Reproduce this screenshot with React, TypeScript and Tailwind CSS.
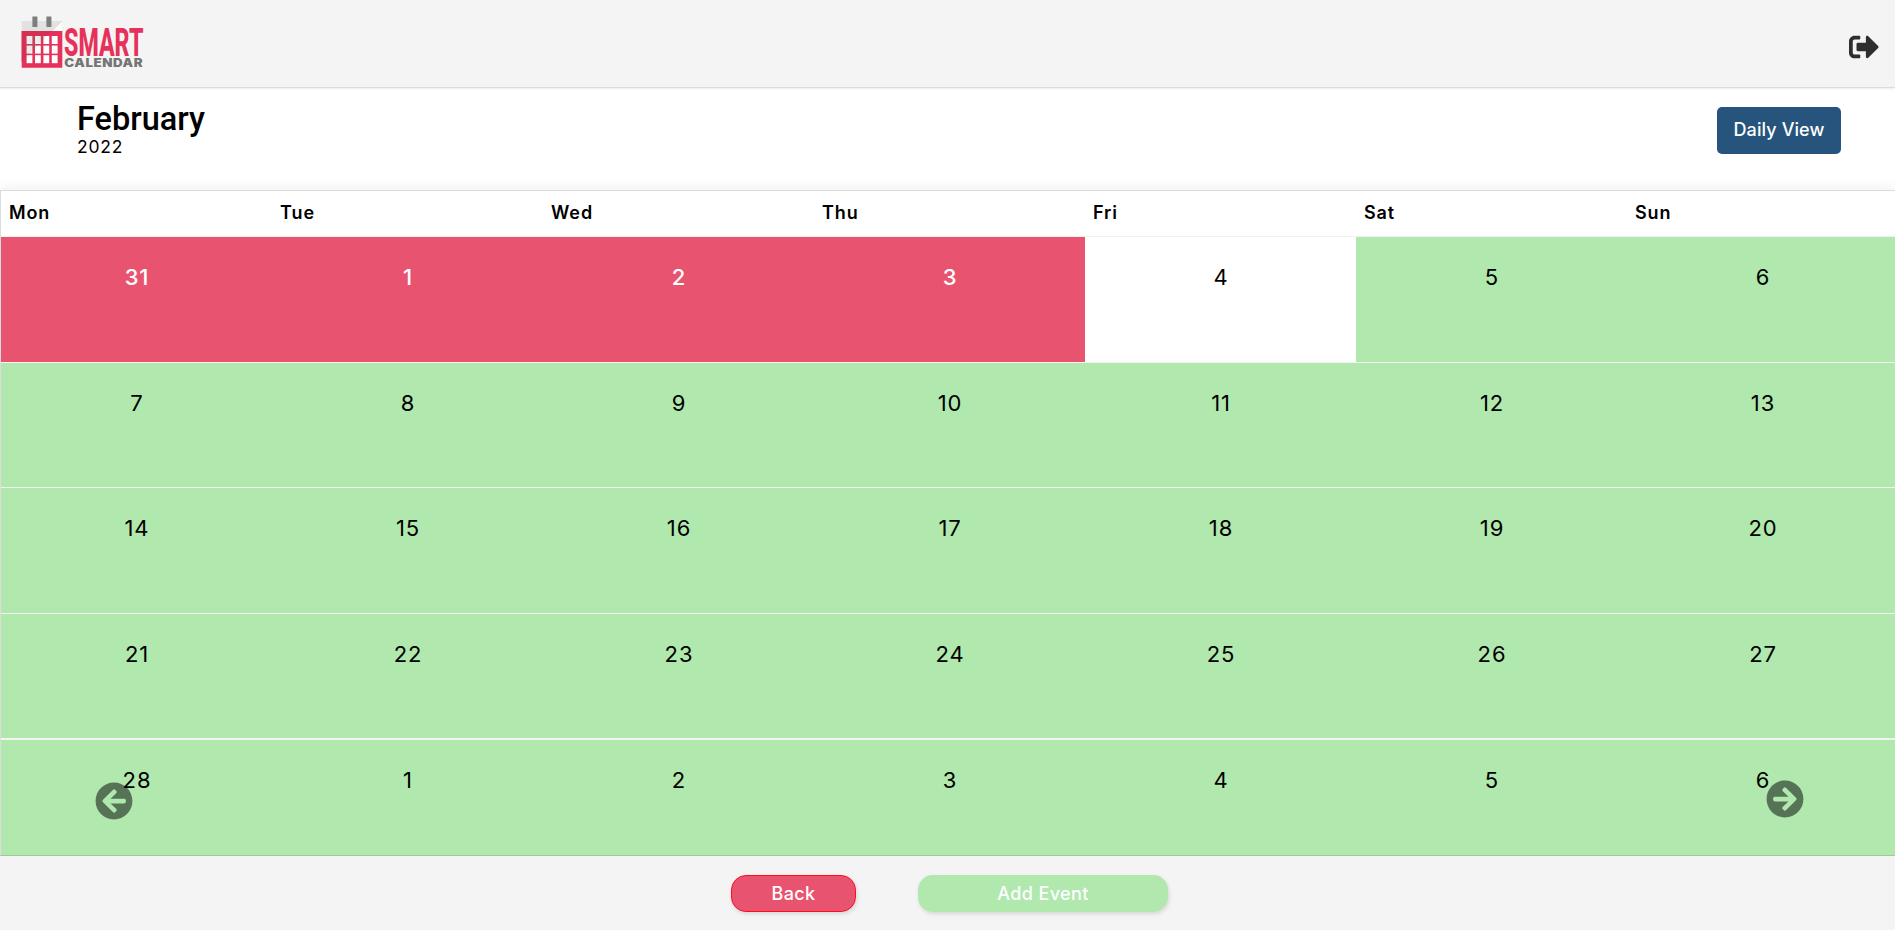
import { FaArrowCircleLeft, FaArrowCircleRight, FaSignOutAlt } from "react-icons/fa";

const dayNames = ["Mon", "Tue", "Wed", "Thu", "Fri", "Sat", "Sun"];

type DayState = "past" | "today" | "open";
type Day = { label: number; state: DayState };

const numbers = [31, ...Array.from({ length: 28 }, (_, i) => i + 1), 1, 2, 3, 4, 5, 6];
const days: Day[] = numbers.map((label, i) => ({
  label,
  state: i < 4 ? "past" : i === 4 ? "today" : "open",
}));
const weeks = [0, 1, 2, 3, 4].map((w) => days.slice(w * 7, w * 7 + 7));

const weekClasses = [
  "h-[126px] border-b",
  "h-[125px] border-b",
  "h-[126px] border-b",
  "h-[126px] border-b-2",
  "h-[116px]",
];

const stateClasses: Record<DayState, string> = {
  past: "bg-[#e8546f] text-white font-medium",
  today: "bg-white text-black font-[380]",
  open: "bg-[#b0e8ae] text-black font-[380]",
};

function Logo() {
  const cols = [26.6, 35, 43.4, 51.8];
  const rows = [36, 45.6, 55.2];
  return (
    <svg className="block h-[87px] w-[160px]" viewBox="0 0 160 87" role="img">
      <path d="M21.7 21H62.3V32H21.7Z" fill="#e2e2e2" />
      <path d="M51.5 32L62.3 21.5V32Z" fill="#fcfcfc" />
      <path d="M32.4 16.5h5V27h-5zM46.4 16.5h5V27h-5z" fill="#7d7d7d" />
      <path d="M21.7 31H62.3V67.7H21.7Z" fill="#e6325a" />
      <path d="M21.7 31H51.5L21.7 62Z" fill="#d52f54" />
      {rows.map((y) =>
        cols.map((x) => <rect key={`${x}-${y}`} x={x} y={y} width="5.8" height="8" fill="#ffffff" />),
      )}
      <path d="M26.6 36H46.5L26.6 57.5Z" fill="#8a8a8a" fillOpacity="0.17" />
      <text
        x="64"
        y="55.8"
        textLength="79.5"
        lengthAdjust="spacingAndGlyphs"
        fontFamily="Roboto"
        fontWeight="800"
        fontSize="38"
        fill="#e6325a"
      >
        SMART
      </text>
      <text
        x="64.2"
        y="66.8"
        textLength="79"
        lengthAdjust="spacingAndGlyphs"
        fontFamily="Inter"
        fontWeight="900"
        fontSize="11.3"
        letterSpacing="0.5"
        fill="#757575"
      >
        CALENDAR
      </text>
    </svg>
  );
}

export default function App() {
  return (
    <div className="flex h-[930px] w-full flex-col overflow-hidden bg-white font-['Inter',sans-serif] text-black">
      <header className="flex h-[88px] shrink-0 items-center justify-between border-b border-[#dcdcdc] bg-[#f4f4f4] pr-4 shadow-[0_1px_2px_rgba(0,0,0,0.08)]">
        <Logo />
        <FaSignOutAlt className="mt-[6px] size-[30px] text-[#2e2e2e]" />
      </header>

      <section className="flex h-[102px] shrink-0 items-start justify-between pr-[54px] pl-[77px]">
        <div className="pt-[12px]">
          <h1 className="font-[Roboto] text-[32.5px] leading-[38px] font-medium">February</h1>
          <p className="text-[17.5px] leading-[18px] font-[380] tracking-[0.8px]">2022</p>
        </div>
        <button className="mt-[19px] h-[47px] w-[124px] rounded-[5px] bg-[#26547c] pb-[2px] text-[18px] font-medium tracking-[0.1px] text-white">
          Daily View
        </button>
      </section>

      <main className="relative h-[666px] shrink-0 border-t border-l border-[#dcdcdc] shadow-[0_-4px_10px_rgba(0,0,0,0.05)]">
        <div className="grid h-[46px] grid-cols-[repeat(7,271px)] border-b border-[#f0f0f0]">
          {dayNames.map((name) => (
            <div key={name} className="pt-[9px] pl-2 text-[18px] leading-[26px] font-semibold tracking-[0.9px]">
              {name}
            </div>
          ))}
        </div>
        {weeks.map((week, w) => (
          <div key={w} className={`grid grid-cols-[repeat(7,271px)] border-[#f4f4f4] ${weekClasses[w]}`}>
            {week.map((day, i) => (
              <div
                key={i}
                className={`pt-[25px] pl-px text-center text-[22px] leading-[30px] tracking-[0.9px] ${stateClasses[day.state]}`}
              >
                {day.label}
              </div>
            ))}
          </div>
        ))}
        <button className="absolute top-[591px] left-[94px] opacity-50">
          <FaArrowCircleLeft className="size-[38px]" />
        </button>
        <button className="absolute top-[589px] left-[1765px] opacity-50">
          <FaArrowCircleRight className="size-[38px]" />
        </button>
      </main>

      <footer className="relative flex h-[74px] shrink-0 items-start gap-[62px] bg-[#f4f4f4] pt-[19px] pl-[731px] shadow-[0_-1px_0_rgba(0,0,0,0.12)]">
        <button className="h-[37px] w-[125px] rounded-[15px] border border-[#ff0d1e] bg-[#e8546f] text-[18px] font-medium tracking-[0.4px] text-white shadow-[1px_2px_4px_rgba(0,0,0,0.12)]">
          Back
        </button>
        <button className="h-[37px] w-[250px] rounded-[15px] bg-[#b0e8ae] text-[18px] font-medium tracking-[0.4px] text-white shadow-[1px_2px_4px_rgba(0,0,0,0.12)]">
          Add Event
        </button>
      </footer>
    </div>
  );
}
